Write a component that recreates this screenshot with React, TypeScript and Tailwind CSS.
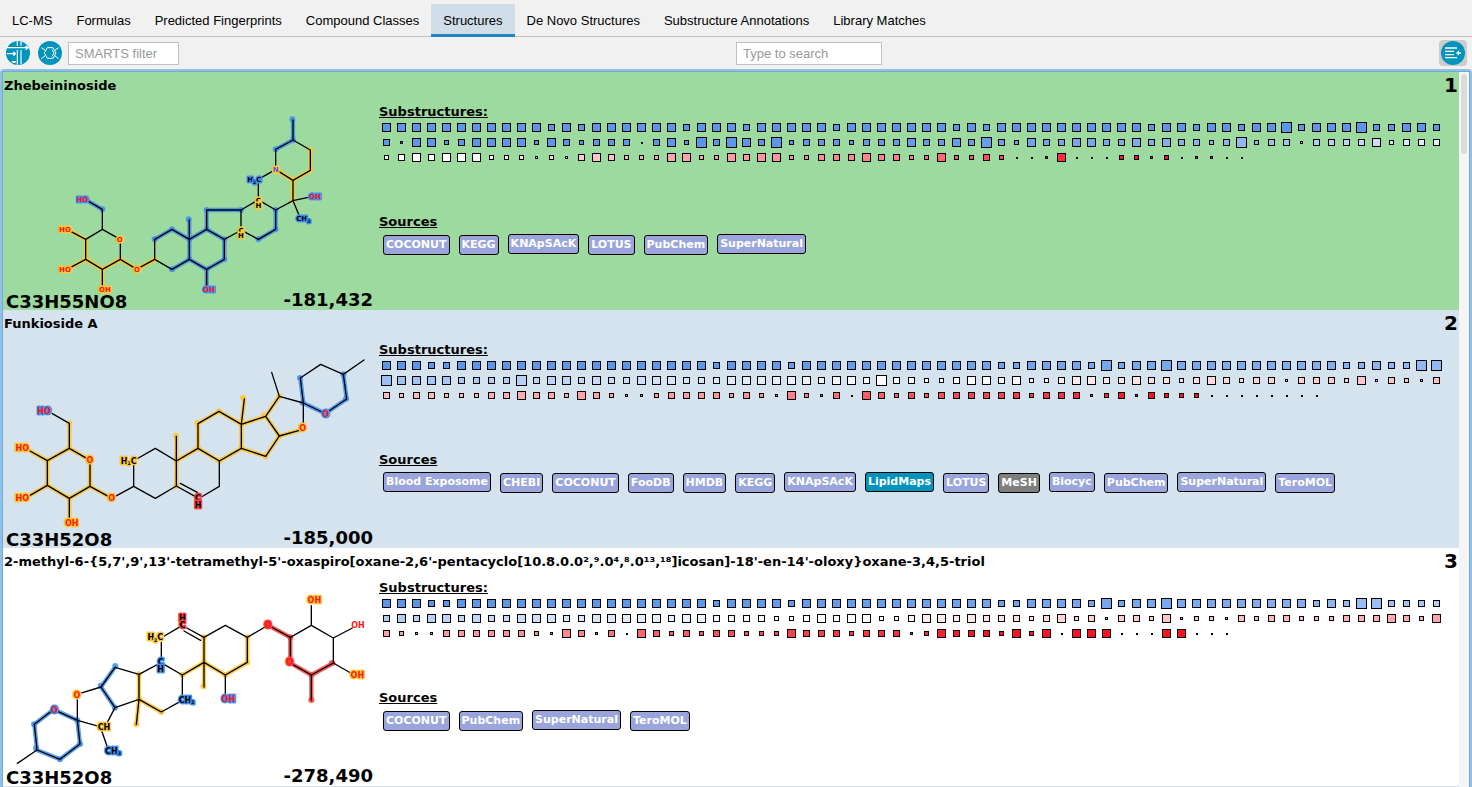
import React from "react";

type Stop = [number, number];
type Hue = "yellow" | "blue" | "red";
type Label = { x: number; y: number; text: string; halo?: Hue; hetero?: boolean; nitrogen?: boolean };
type Molecule = {
  title: string;
  viewBox: string;
  fontSize: number;
  bonds: string;
  marked: Partial<Record<Hue, string>>;
  atoms: Partial<Record<Hue, string>>;
  labels: Label[];
};
type Source = { name: string; tone?: "curated" | "mesh" };
type Candidate = {
  name: string;
  formula: string;
  score: string;
  background: string;
  rows: string;
  stops: Stop[];
  sources: Source[];
  molecule: Molecule;
};

const HUES: Record<Hue, string> = { yellow: "#fcc633", blue: "#3f8eec", red: "#f8423f" };

const SIZES: Record<string, string> = {
  "1": "size-px",
  "3": "size-[3px]",
  "5": "size-[5px]",
  "7": "size-[7px]",
  "9": "size-[9px]",
  b: "size-[11px]",
};

const TONES = {
  plain: "bg-[#9aa6db]",
  curated: "bg-[#0093bb]",
  mesh: "bg-[#7f7f7f]",
};

const CANDIDATES: Candidate[] = [
  {
    name: "Zhebeininoside",
    formula: "C33H55NO8",
    score: "-181,432",
    background: "bg-[#9dda9f]",
    rows:
      "999999999997979999997999" + "799999799999997979999999" + "999799799799b7999b77997" +
      "739957999959757771795b7b" + "97b5777577797797b7597799" + "779797757b5773777795777" +
      "579799955535379755599559" + "799557779775595575113911" + "1553513311",
    stops: [
      [0, -1], [95, -1], [110, -0.93], [118, -0.83], [128, -0.68], [135, -0.4], [141, -0.15], [143, 0],
      [147, 0], [149, 0.08], [156, 0.24], [160, 0.36], [166, 0.43], [177, 0.55], [180, 0.68], [187, 0.88], [192, 1],
    ],
    sources: [
      { name: "COCONUT" }, { name: "KEGG" }, { name: "KNApSAcK" },
      { name: "LOTUS" }, { name: "PubChem" }, { name: "SuperNatural" },
    ],
    molecule: {
      title: "Structure of Zhebeininoside",
      viewBox: "-111 -21 1128 582",
      fontSize: 21,
      bonds:
        "M147 290 187 313 187 373 230 397M241 413 241 463 187 493 137 463 137 403 187 373M137 403 92 379M137 463 92 487M187 493V542M241 463 281 487M300 487 344 463 344 403 396 373 448 403 448 463 396 493 344 463M448 403V345M448 403 500 373 553 403 553 463 500 493 448 463M500 493V542M500 373V315H603V364M553 403 594 381M603 315 646 290M664 290 707 315 707 373 655 403 612 380M655 276V236M664 218 697 199M707 184V133L759 105 811 135 811 196 759 226 716 199M759 105V45M759 226V287L707 315M759 287 805 277M759 287 776 328",
      marked: {
        blue: "M147 290 187 313M448 345V463M344 403 396 373 448 403 500 373 553 403 553 463 500 493 448 463 396 493M500 373V315H603M707 315V373L655 403M707 133 759 105V45M500 493V542",
        yellow: "M92 379 137 403 137 463 92 487M137 463 187 493V542M187 493 241 463 281 487M300 487 344 463M811 135V196L759 226V287M759 226 716 199",
      },
      atoms: {
        blue: "M187 313h0M344 403h0M396 373h0M396 493h0M446 343h0M448 403h0M448 463h0M500 373h0M553 403h0M553 463h0M500 493h0M500 315h0M603 315h0M707 315h0M707 373h0M655 403h0M707 133h0M759 105h0M757 43h0",
        yellow: "M344 463h0M811 135h0M811 196h0M759 226h0M759 287h0M137 463h0M187 493h0M241 463h0",
      },
      labels: [
        { x: 127, y: 283, text: "HO", halo: "blue", hetero: true },
        { x: 75, y: 373, text: "HO", halo: "yellow", hetero: true },
        { x: 75, y: 493, text: "HO", halo: "yellow", hetero: true },
        { x: 195, y: 553, text: "OH", halo: "yellow", hetero: true },
        { x: 239, y: 403, text: "O", halo: "yellow", hetero: true },
        { x: 291, y: 493, text: "O", halo: "yellow", hetero: true },
        { x: 507, y: 553, text: "OH", halo: "blue", hetero: true },
        { x: 603, y: 375, text: "C", halo: "yellow" },
        { x: 603, y: 392, text: "H", halo: "yellow" },
        { x: 655, y: 285, text: "C", halo: "yellow" },
        { x: 655, y: 302, text: "H", halo: "yellow" },
        { x: 643, y: 224, text: "H2C", halo: "blue" },
        { x: 707, y: 194, text: "N", halo: "yellow", nitrogen: true },
        { x: 825, y: 273, text: "OH", halo: "blue", hetero: true },
        { x: 790, y: 341, text: "CH3", halo: "blue" },
      ],
    },
  },
  {
    name: "Funkioside A",
    formula: "C33H52O8",
    score: "-185,000",
    background: "bg-[#d5e3ee]",
    rows:
      "99977" + "99999999999999999" + "799997" + "99999999" + "9999977" + "9999" + "7b799b" + "99999999999" + "77977bb" +
      "b99997777b" + "7997977999" + "777999999799" + "7b77" + "55799795579977977579757737775937537" +
      "757755577977597533577775753953719757" + "5777777577735737555" + "11111111",
    stops: [
      [0, -1], [22, -0.98], [36, -0.9], [50, -0.83], [63, -0.75], [70, -0.66], [71, -0.6], [85, -0.35], [96, -0.17],
      [106, 0], [111, 0], [116, 0.08], [121, 0.12], [141, 0.27], [155, 0.38], [164, 0.44], [169, 0.52], [174, 0.67], [186, 0.85], [193, 1],
    ],
    sources: [
      { name: "Blood Exposome" }, { name: "CHEBI" }, { name: "COCONUT" }, { name: "FooDB" }, { name: "HMDB" },
      { name: "KEGG" }, { name: "KNApSAcK" }, { name: "LipidMaps", tone: "curated" }, { name: "LOTUS" },
      { name: "MeSH", tone: "mesh" }, { name: "Biocyc" }, { name: "PubChem" }, { name: "SuperNatural" }, { name: "TeroMOL" },
    ],
    molecule: {
      title: "Structure of Funkioside A",
      viewBox: "9 -27 1128 582",
      fontSize: 24,
      bonds:
        "M157 206 208 235 208 310 260 340M270 358V424L208 460 142 421 142 347 208 310M142 347 90 318M142 421 90 451M208 460V520M270 424 325 454M346 454 401 424 466 460 529 423 529 348 466 310 410 342M401 424V360M529 348V274M529 348 594 310V236L657 199 724 238V310L658 348 594 310M658 348V424L604 456M529 423 585 454M541 415 592 442M724 238 733 162M724 238 797 214 838 273 797 334 724 310M838 273 898 256M797 214 838 154 910 174V238M838 154 815 82M910 174 901 99 962 58 1030 88 1092 45M1030 88 1040 162 987 198M910 174 966 201",
      marked: {
        yellow: "M208 235V310L260 340M270 358V424L208 460 142 421V347L208 310M142 347 90 318M142 421 90 451M208 460V520M270 424 325 454M529 274V423M529 348 594 310V236L657 199 724 238V310L658 348 594 310M724 238 733 162M724 238 797 214 838 273 797 334 724 310M838 273 898 256M797 214 838 154",
        blue: "M910 174 901 99M910 174 966 201M987 198 1040 162 1030 88",
      },
      atoms: {
        yellow: "M208 235h0M208 310h0M142 347h0M142 421h0M208 460h0M270 424h0M528 272h0M592 234h0M657 199h0M729 158h0M529 348h0M529 423h0M594 310h0M658 348h0M724 238h0M724 310h0M793 210h0M838 273h0M797 334h0M838 154h0",
        blue: "M900 99h0M908 173h0M1030 88h0M1038 161h0",
      },
      labels: [
        { x: 132, y: 198, text: "HO", halo: "blue", hetero: true },
        { x: 67, y: 309, text: "HO", halo: "yellow", hetero: true },
        { x: 67, y: 459, text: "HO", halo: "yellow", hetero: true },
        { x: 215, y: 535, text: "OH", halo: "yellow", hetero: true },
        { x: 270, y: 347, text: "O", halo: "yellow", hetero: true },
        { x: 335, y: 460, text: "O", halo: "yellow", hetero: true },
        { x: 386, y: 348, text: "H2C", halo: "yellow" },
        { x: 594, y: 460, text: "C", halo: "red" },
        { x: 594, y: 480, text: "H", halo: "red" },
        { x: 908, y: 250, text: "O", halo: "yellow", hetero: true },
        { x: 977, y: 207, text: "O", halo: "blue", hetero: true },
      ],
    },
  },
  {
    name: "2-methyl-6-{5,7',9',13'-tetramethyl-5'-oxaspiro[oxane-2,6'-pentacyclo[10.8.0.0²,⁹.0⁴,⁸.0¹³,¹⁸]icosan]-18'-en-14'-oloxy}oxane-3,4,5-triol",
    formula: "C33H52O8",
    score: "-278,490",
    background: "bg-white",
    rows:
      "99977" + "99999999999999999" + "799997" + "99999999" + "9999977" + "9999" + "7b799b" + "999999999" + "797bb7777" +
      "797997977999779999979977775579799557" + "99797775795737759355375775557779759" +
      "753377777753973719757577555977757773" + "597775959199911199111",
    stops: [
      [0, -1], [22, -0.98], [36, -0.9], [50, -0.83], [61, -0.76], [64, -0.66], [70, -0.5], [77, -0.37], [88, -0.17],
      [99, 0], [103, 0], [106, 0.06], [117, 0.19], [130, 0.3], [141, 0.38], [154, 0.5], [159, 0.65], [169, 0.8], [178, 0.9], [182, 1],
    ],
    sources: [{ name: "COCONUT" }, { name: "PubChem" }, { name: "SuperNatural" }, { name: "TeroMOL" }],
    molecule: {
      title: "Structure of candidate 3",
      viewBox: "9 -33 1128 582",
      fontSize: 24,
      bonds:
        "M52 535 111 495 180 523 240 477 232 406 173 379M154 379 103 418 111 495M232 406V340M240 325 303 306 345 247 417 268 417 343 345 368 303 306M232 406 297 424M320 416 345 368M306 440 322 486M417 343 409 418M417 343 484 381 540 350M547 332V270L492 238M417 268 473 238M484 222V172M493 153 537 127M555 126 612 157V232L547 270M552 138 602 166M612 157 676 121 742 157V232L676 270 612 232V306M676 270V330M742 157 795 126M814 126 871 157V222M871 157 934 121V62M934 121 1000 159 1057 129M1000 159V234L934 270 878 238M934 270V345M1000 234 1052 264",
      marked: {
        yellow: "M417 268V343L409 418M417 343 484 381M547 270 612 232M612 157V306M742 157V232L676 270 612 232",
        blue: "M103 418 111 495 180 523 240 477 232 406 173 379M154 379 103 418M345 247 303 306 345 368",
        red: "M814 126 871 157V222M878 238 934 270V345M934 270 1000 234",
      },
      atoms: {
        yellow: "M417 268h0M417 343h0M409 418h0M484 381h0M547 270h0M612 157h0M612 232h0M610 304h0M742 157h0M742 232h0M676 270h0",
        blue: "M346 243h0M302 302h0M345 368h0M232 406h0M102 418h0M108 490h0M180 523h0M240 477h0",
        red: "M871 157h0M934 270h0M996 234h0M934 345h0",
      },
      labels: [
        { x: 231, y: 330, text: "O", halo: "yellow", hetero: true },
        { x: 163, y: 375, text: "O", halo: "blue", hetero: true },
        { x: 312, y: 428, text: "CH", halo: "yellow" },
        { x: 339, y: 498, text: "CH3", halo: "blue" },
        { x: 560, y: 345, text: "CH2", halo: "blue" },
        { x: 482, y: 232, text: "C", halo: "blue" },
        { x: 482, y: 252, text: "H", halo: "blue" },
        { x: 466, y: 158, text: "H2C", halo: "yellow" },
        { x: 547, y: 99, text: "H", halo: "red" },
        { x: 547, y: 120, text: "C", halo: "red" },
        { x: 804, y: 120, text: "O", halo: "red", hetero: true },
        { x: 869, y: 233, text: "O", halo: "red", hetero: true },
        { x: 943, y: 47, text: "OH", halo: "yellow", hetero: true },
        { x: 1074, y: 121, text: "OH", hetero: true },
        { x: 1072, y: 271, text: "OH", halo: "yellow", hetero: true },
        { x: 685, y: 344, text: "OH", halo: "blue", hetero: true },
      ],
    },
  },
];

/** Colour on the blue - white - red scale for the square at a given index. */
function scaleColor(index: number, stops: Stop[]): string {
  let t = stops[stops.length - 1][1];
  for (let i = 1; i < stops.length; i++) {
    const [x0, t0] = stops[i - 1];
    const [x1, t1] = stops[i];
    if (index <= x1) {
      t = t0 + ((t1 - t0) * (index - x0)) / (x1 - x0);
      break;
    }
  }
  const end = t < 0 ? [90, 150, 234] : [255, 15, 31];
  const k = Math.min(1, Math.abs(t));
  return `rgb(${end.map((c) => Math.round(255 + (c - 255) * k)).join(",")})`;
}

function MoleculeDrawing({ molecule }: { molecule: Molecule }) {
  const hues = Object.keys(HUES) as Hue[];
  return (
    <svg viewBox={molecule.viewBox} className="h-[194px] w-[376px] overflow-visible" role="img" aria-label={molecule.title}>
      <g fill="none" strokeLinecap="round" strokeLinejoin="round">
        {hues.map((h) => (
          <g key={h} stroke={HUES[h]}>
            <path d={molecule.marked[h]} strokeWidth="13" opacity="0.85" />
            <path d={molecule.atoms[h]} strokeWidth="18" opacity="0.85" />
          </g>
        ))}
        <path d={molecule.bonds} stroke="#000" strokeWidth="4" />
      </g>
      {molecule.labels.map((l, i) => (
        <text
          key={i}
          x={l.x}
          y={l.y + 8}
          textAnchor="middle"
          fontSize={molecule.fontSize}
          fontWeight="700"
          fontFamily="'DejaVu Sans', sans-serif"
          fill={l.hetero ? "#ff1414" : l.nitrogen ? "#5252e0" : "#000"}
          stroke={l.halo ? HUES[l.halo] : "none"}
          strokeWidth="9"
          strokeLinejoin="round"
          paintOrder="stroke"
        >
          {/\d/.test(l.text)
            ? l.text.split(/(\d)/).map((part, k, parts) =>
                /\d/.test(part) ? (
                  <tspan key={k} dy="4" fontSize="14">
                    {part}
                  </tspan>
                ) : (
                  <tspan key={k} dy={k > 0 && /\d/.test(parts[k - 1]) ? -4 : 0}>
                    {part}
                  </tspan>
                ),
              )
            : l.text}
        </text>
      ))}
    </svg>
  );
}

function SourceTag({ source }: { source: Source }) {
  const raised = /[py]/.test(source.name);
  return (
    <li
      className={`h-5 rounded-[3px] border border-black px-0.5 text-[11px] leading-[18px] font-bold text-white ${
        TONES[source.tone ?? "plain"]
      } ${raised ? "self-start" : "self-end"}`}
    >
      {source.name}
    </li>
  );
}

function CandidateCard({ candidate, rank }: { candidate: Candidate; rank: number }) {
  return (
    <li className={`shrink-0 ${candidate.background}`}>
      <div className="flex h-[26px] items-center justify-between px-px">
        <h2 className="pt-0.5 text-[13px] font-bold whitespace-nowrap">{candidate.name}</h2>
        <span className="text-xl leading-[26px] font-bold">{rank}</span>
      </div>
      <div className="flex">
        <div className="w-[376px] shrink-0">
          <MoleculeDrawing molecule={candidate.molecule} />
          <div className="flex h-[18px] items-center justify-between pr-1.5 pl-[3px] text-lg leading-[18px] font-bold">
            <span className="pt-0.5">{candidate.formula}</span>
            <span className="pb-0.5">{candidate.score}</span>
          </div>
        </div>
        <div className="min-w-0 flex-1 pt-1.5">
          <h3 className="text-[13px] leading-4 font-bold underline">Substructures:</h3>
          <div className="flex min-h-[94px] flex-wrap content-start pr-[15px]">
            {candidate.rows.split("").map((size, i) => (
              <span key={i} className="flex size-[15px] items-center justify-center">
                <span
                  className={`${SIZES[size]} border border-black`}
                  style={{ backgroundColor: scaleColor(i, candidate.stops) }}
                />
              </span>
            ))}
          </div>
          <h3 className="text-[13px] leading-4 font-bold underline">Sources</h3>
          <ul className="flex h-[25px] gap-[9px] pt-1 pl-1 whitespace-nowrap">
            {candidate.sources.map((s) => (
              <SourceTag key={s.name} source={s} />
            ))}
          </ul>
        </div>
      </div>
    </li>
  );
}

const TABS = [
  "LC-MS",
  "Formulas",
  "Predicted Fingerprints",
  "Compound Classes",
  "Structures",
  "De Novo Structures",
  "Substructure Annotations",
  "Library Matches",
];

function FilterIcon() {
  return (
    <svg viewBox="0 0 72 72" className="size-6" aria-hidden="true">
      <circle cx="36" cy="36" r="36" fill="#0093bb" />
      <g stroke="#fff" fill="none">
        <path d="M34 0V14M45 1V14M34 27V71M45 27V70" strokeWidth="3.5" />
        <path d="M3 20H65M59 14l7 6-7 6" strokeWidth="4" />
        <path d="M3 38H28M22 32l6 6-6 6" strokeWidth="4" />
      </g>
      <path d="M16 60H31L28 66H21Z" fill="#fff" />
    </svg>
  );
}

function RingIcon() {
  return (
    <svg viewBox="0 0 72 72" className="size-6" aria-hidden="true">
      <circle cx="36" cy="36" r="36" fill="#0093bb" />
      <g stroke="#fff" strokeWidth="3" fill="none">
        <path d="M28 20H45L54 36 45 52H28L19 36Z" />
        <path d="M42 26l6 10-6 10M22 28 10 20M50 28 62 20M22 44 10 53M50 44 62 53" />
      </g>
    </svg>
  );
}

function ListAddIcon() {
  return (
    <svg viewBox="0 0 72 72" className="size-6" aria-hidden="true">
      <circle cx="36" cy="36" r="36" fill="#0093bb" />
      <path d="M12 21H48M12 31H39M12 41H39M12 50H48M52 29V43M46 36H60" stroke="#fff" strokeWidth="4" fill="none" />
    </svg>
  );
}

export default function App() {
  return (
    <div className="flex h-screen flex-col overflow-hidden bg-[#f1f1f1] font-['Liberation_Sans',sans-serif] text-[13px] text-black">
      <nav className="flex h-[37px] shrink-0 border-b border-[#c0c0c0] pt-1" role="tablist">
        {TABS.map((tab) => (
          <button
            key={tab}
            type="button"
            role="tab"
            aria-selected={tab === "Structures"}
            className={
              tab === "Structures"
                ? "-mb-px border-b-[3px] border-[#2285c4] bg-[#d1dee9] px-3 pt-1 whitespace-nowrap"
                : "-mb-px border-b-[3px] border-transparent px-3 pt-1 whitespace-nowrap"
            }
          >
            {tab}
          </button>
        ))}
      </nav>

      <div className="flex h-8 shrink-0 items-center">
        <div className="flex w-1/2 items-center gap-2 pl-1.5">
          <button type="button" aria-label="Filter">
            <FilterIcon />
          </button>
          <button type="button" aria-label="Structure sketch">
            <RingIcon />
          </button>
          <input
            type="text"
            aria-label="SMARTS filter"
            placeholder="SMARTS filter"
            className="-ml-0.5 h-[23px] w-[111px] border border-[#c0c0c0] bg-white px-1.5 placeholder:text-[#999999]"
          />
        </div>
        <div className="flex w-1/2 items-center justify-between pr-[5px]">
          <input
            type="text"
            aria-label="Search"
            placeholder="Type to search"
            className="h-[23px] w-[146px] border border-[#c0c0c0] bg-white px-1.5 placeholder:text-[#999999]"
          />
          <button
            type="button"
            aria-label="Show details"
            className="flex h-[26px] w-7 items-center justify-center rounded-sm bg-[#cccccc]"
          >
            <ListAddIcon />
          </button>
        </div>
      </div>

      <main className="flex min-h-0 flex-1 rounded-t-sm border-x-2 border-t-2 border-[#90c1e8]">
        <div className="flex min-h-0 flex-1 border-x border-t border-[#78a9d4] font-['DejaVu_Sans',sans-serif]">
          <ol className="flex min-w-0 flex-1 flex-col overflow-hidden bg-[#d5e3ee]">
            {CANDIDATES.map((c, i) => (
              <CandidateCard key={c.score} candidate={c} rank={i + 1} />
            ))}
          </ol>
          <div className="w-2.5 shrink-0 bg-[#f5f5f5] px-0.5 pt-0.5" aria-hidden="true">
            <div className="h-20 rounded-full bg-[#dbdbdb]" />
          </div>
        </div>
      </main>
    </div>
  );
}
